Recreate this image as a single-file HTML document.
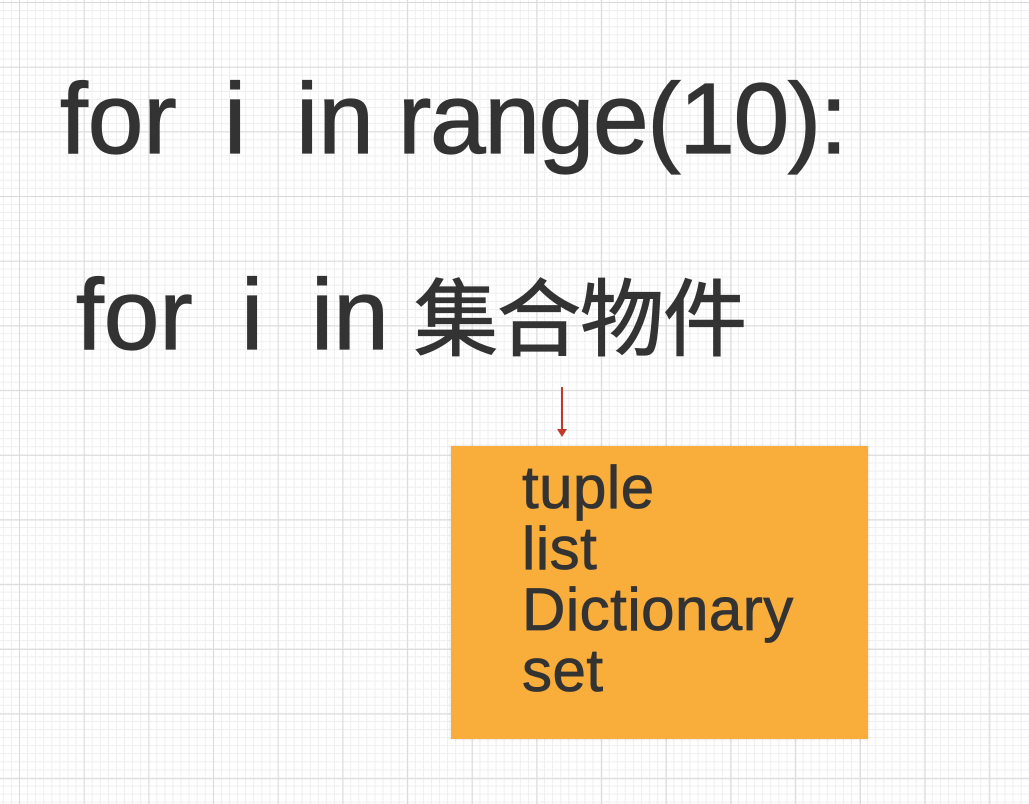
<!DOCTYPE html>
<html><head><meta charset="utf-8"><style>
body{margin:0;width:1029px;height:804px;overflow:hidden;position:relative;
background-color:#fff;
background-image:
linear-gradient(to right,#dadada 1px,transparent 1px),
linear-gradient(to bottom,#dadada 1px,transparent 1px),
linear-gradient(to right,#eeeeee 1px,transparent 1px),
linear-gradient(to bottom,#eeeeee 1px,transparent 1px);
background-size:64.7px 64.7px,64.7px 64.7px,8.09px 8.09px,8.09px 8.09px;
background-position:19px 2px,19px 2px,19px 2px,19px 2px;
font-family:"Liberation Sans","Noto Sans CJK SC",sans-serif;color:#333;}
.t{position:absolute;white-space:pre;font-size:100px;line-height:1;-webkit-text-stroke:1.2px #333;}
.box{position:absolute;left:451px;top:446px;width:417px;height:293px;background:#f9ae3b;box-shadow:0 0 3px rgba(0,0,0,.15);}
.box div{position:absolute;left:71px;font-size:60px;line-height:1;white-space:pre;-webkit-text-stroke:0.8px #333;letter-spacing:0.5px}
</style></head><body>
<div class="t" style="left:60px;top:69px">for</div>
<div class="t" style="left:224px;top:69px">i</div>
<div class="t" style="left:296px;top:69px">in</div>
<div class="t" style="left:398px;top:69px;letter-spacing:-1.3px">range(10):</div>
<div class="t" style="left:76px;top:265px">for</div>
<div class="t" style="left:241px;top:265px">i</div>
<div class="t" style="left:311px;top:265px">in</div>
<div class="t" style="left:414px;top:278px;font-size:84px;-webkit-text-stroke:1.2px #333;letter-spacing:-1px">集合物件</div>
<div style="position:absolute;left:561px;top:387px;width:1.5px;height:44px;background:#c0392b"></div>
<div style="position:absolute;left:557px;top:429px;width:0;height:0;border-left:5px solid transparent;border-right:5px solid transparent;border-top:8px solid #c0392b"></div>
<div class="box">
<div style="top:12px">tuple</div>
<div style="top:73px">list</div>
<div style="top:134px">Dictionary</div>
<div style="top:195px">set</div>
</div>
</body></html>
